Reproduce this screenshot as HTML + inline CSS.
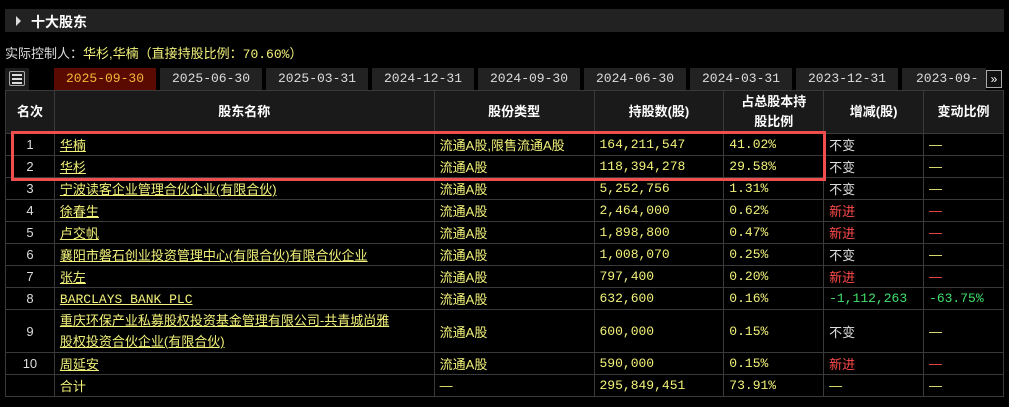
<!DOCTYPE html>
<html><head><meta charset="utf-8"><style>
*{margin:0;padding:0;box-sizing:border-box}
body{width:1009px;height:407px;background:#000;font-family:"Liberation Sans","Noto Sans CJK SC",sans-serif;font-size:13px;color:#e0e0e0;position:relative;overflow:hidden}
.hdr{position:absolute;left:5px;top:9px;width:999px;height:23px;background:#222;}
.hdr span{position:absolute;left:26px;top:3px;font-weight:bold;color:#fff;font-size:14px}
.hdr i{position:absolute;left:11px;top:7px;border-left:5px solid #ddd;border-top:5px solid transparent;border-bottom:5px solid transparent}
.ctl{position:absolute;left:5px;top:43px;font-size:13px;color:#ddd}
.ctl b{font-weight:normal;color:#f2f27a}
.m{font-family:"Liberation Mono",monospace}
.tab{position:absolute;top:68px;height:22px;width:102px;background:#222;color:#ddd;text-align:center;line-height:22px;font-size:13px;font-family:"Liberation Mono",monospace}
.ico{position:absolute;left:5px;top:68px;width:24px;height:22px;background:#1c1c1c}
.ico div{position:absolute;left:4px;top:3px;width:16px;height:15px;border:1px solid #aaa;border-radius:2px}
.ico div i{position:absolute;left:2px;height:2px;width:10px;background:#ddd;border-left:2px solid #ddd}
table{position:absolute;left:5px;top:90px;border-collapse:collapse;width:999px}
td,th{border:1px solid #3a3a3a;height:22px;padding:0 0 0 5px;text-align:left;color:#f2f27a;font-weight:normal;white-space:nowrap}
th{background:#1a1a1a;color:#fff;font-weight:bold;text-align:center;height:43px;padding:0;line-height:20px}
td.n{text-align:center;color:#ddd;padding:0}
td a{color:#f2f27a;text-decoration:underline}
td.d{font-family:"Liberation Mono",monospace;font-size:13px}
.w{color:#ddd}.r{color:#ff4b4b}.g{color:#3fe06a}
.box{position:absolute;left:11px;top:131px;width:815px;height:50px;border:3px solid #f04e4e}
</style></head><body>
<div class="hdr"><i></i><span>十大股东</span></div>
<div class="ctl">实际控制人：<b>华杉,华楠（直接持股比例：<span class="m">70.60%</span>）</b></div>
<div class="ico"><div><i style="top:2px"></i><i style="top:6px"></i><i style="top:10px"></i></div></div>
<div class="tab" style="left:54px;background:#5a0a00;color:#f5b83a">2025-09-30</div>
<div class="tab" style="left:160px">2025-06-30</div>
<div class="tab" style="left:266px">2025-03-31</div>
<div class="tab" style="left:372px">2024-12-31</div>
<div class="tab" style="left:478px">2024-09-30</div>
<div class="tab" style="left:584px">2024-06-30</div>
<div class="tab" style="left:690px">2024-03-31</div>
<div class="tab" style="left:796px">2023-12-31</div>
<div class="tab" style="left:902px;width:84px;text-align:left;padding-left:14px">2023-09-3</div>
<div style="position:absolute;left:986px;top:70px;width:16px;height:18px;border:1px solid #aaa;background:#111;color:#fff;font-size:12px;line-height:16px;text-align:center">»</div>
<table>
<colgroup><col style="width:49px"><col style="width:380px"><col style="width:160px"><col style="width:130px"><col style="width:100px"><col style="width:100px"><col style="width:80px"></colgroup>
<tr><th>名次</th><th>股东名称</th><th>股份类型</th><th>持股数(股)</th><th>占总股本持<br>股比例</th><th>增减(股)</th><th>变动比例</th></tr>
<tr><td class="n">1</td><td><a>华楠</a></td><td>流通A股,限售流通A股</td><td class="d">164,211,547</td><td class="d">41.02%</td><td class="w">不变</td><td>—</td></tr>
<tr><td class="n">2</td><td><a>华杉</a></td><td>流通A股</td><td class="d">118,394,278</td><td class="d">29.58%</td><td class="w">不变</td><td>—</td></tr>
<tr><td class="n">3</td><td><a>宁波读客企业管理合伙企业(有限合伙)</a></td><td>流通A股</td><td class="d">5,252,756</td><td class="d">1.31%</td><td class="w">不变</td><td>—</td></tr>
<tr><td class="n">4</td><td><a>徐春生</a></td><td>流通A股</td><td class="d">2,464,000</td><td class="d">0.62%</td><td class="r">新进</td><td class="r">—</td></tr>
<tr><td class="n">5</td><td><a>卢交帆</a></td><td>流通A股</td><td class="d">1,898,800</td><td class="d">0.47%</td><td class="r">新进</td><td class="r">—</td></tr>
<tr><td class="n">6</td><td><a>襄阳市磐石创业投资管理中心(有限合伙)有限合伙企业</a></td><td>流通A股</td><td class="d">1,008,070</td><td class="d">0.25%</td><td class="w">不变</td><td>—</td></tr>
<tr><td class="n">7</td><td><a>张左</a></td><td>流通A股</td><td class="d">797,400</td><td class="d">0.20%</td><td class="r">新进</td><td class="r">—</td></tr>
<tr><td class="n">8</td><td><a class="m">BARCLAYS BANK PLC</a></td><td>流通A股</td><td class="d">632,600</td><td class="d">0.16%</td><td class="g d">-1,112,263</td><td class="g d">-63.75%</td></tr>
<tr><td class="n" style="height:43px">9</td><td style="line-height:21px"><a>重庆环保产业私募股权投资基金管理有限公司-共青城尚雅</a><br><a>股权投资合伙企业(有限合伙)</a></td><td>流通A股</td><td class="d">600,000</td><td class="d">0.15%</td><td class="w">不变</td><td>—</td></tr>
<tr><td class="n">10</td><td><a>周延安</a></td><td>流通A股</td><td class="d">590,000</td><td class="d">0.15%</td><td class="r">新进</td><td class="r">—</td></tr>
<tr><td class="n"></td><td>合计</td><td>—</td><td class="d">295,849,451</td><td class="d">73.91%</td><td>—</td><td>—</td></tr>
</table>
<div class="box"></div>
</body></html>
